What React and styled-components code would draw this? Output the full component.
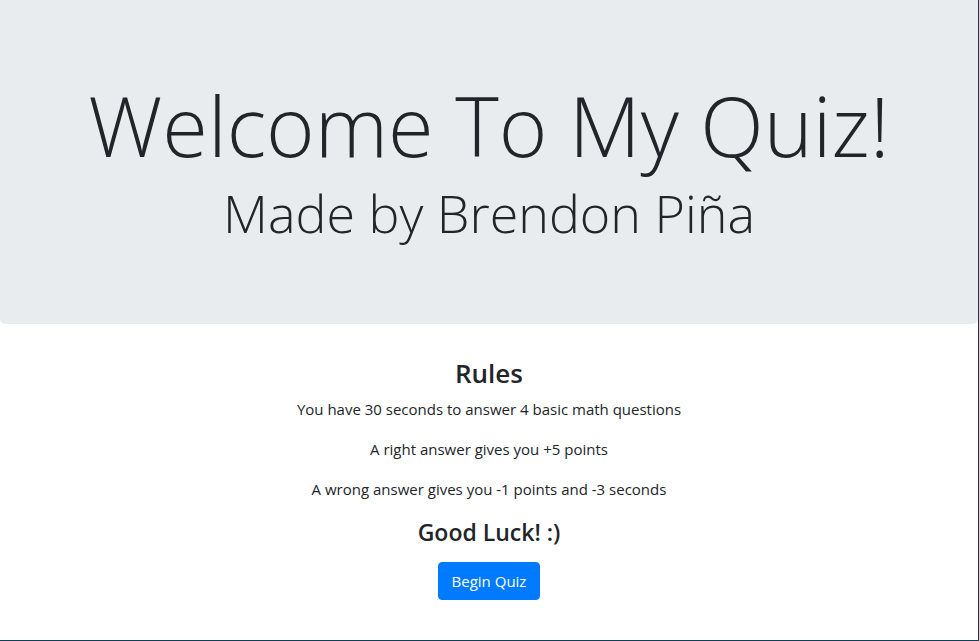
import React from "react";
import styled, { createGlobalStyle } from "styled-components";

const GlobalStyle = createGlobalStyle`
  html, body {
    margin: 0;
    padding: 0;
  }
  body {
    font-family: "Open Sans", "Noto Sans", "Liberation Sans", sans-serif;
    color: #212529;
    background: #fff;
  }
  * {
    box-sizing: border-box;
  }
`;

const Page = styled.div`
  min-height: 100vh;
  border-right: 1px solid #123c5c;
  border-bottom: 1px solid #123c5c;
`;

const Jumbotron = styled.header`
  background: #e9ecef;
  border-radius: 0 0 5px 5px;
  height: 324px;
  display: flex;
  flex-direction: column;
  align-items: center;
  justify-content: center;
  gap: 14px;
  margin-bottom: 34px;
  padding-bottom: 4px;
`;

const Title = styled.h1`
  margin: 0;
  font-weight: 300;
  font-size: ${(p) => p.size}px;
  line-height: 1.1;
  text-align: center;
`;

const Main = styled.main`
  display: flex;
  flex-direction: column;
  align-items: center;
  text-align: center;
`;

const Heading = styled.h3`
  margin: ${(p) => p.top || 0}px 0 8px;
  font-weight: 600;
  font-size: ${(p) => p.size}px;
  line-height: 1.2;
`;

const Rule = styled.p`
  margin: 0 0 16px;
  font-size: 15px;
  line-height: 24px;
`;

const Button = styled.button`
  margin-top: 7px;
  font-family: inherit;
  font-size: 15px;
  line-height: 24px;
  color: #fff;
  background: #007bff;
  border: 1px solid #007bff;
  border-radius: 4px;
  padding: 6px 12px;
  width: 102px;
  cursor: pointer;
`;

export default function App() {
  return (
    <Page>
      <GlobalStyle />
      <Jumbotron>
        <Title size={83}>Welcome To My Quiz!</Title>
        <Title size={52}>Made by Brendon Piña</Title>
      </Jumbotron>
      <Main>
        <Heading size={26}>Rules</Heading>
        <Rule>You have 30 seconds to answer 4 basic math questions</Rule>
        <Rule>A right answer gives you +5 points</Rule>
        <Rule>A wrong answer gives you -1 points and -3 seconds</Rule>
        <Heading size={23} top={2}>Good Luck! :)</Heading>
        <Button type="button">Begin Quiz</Button>
      </Main>
    </Page>
  );
}
